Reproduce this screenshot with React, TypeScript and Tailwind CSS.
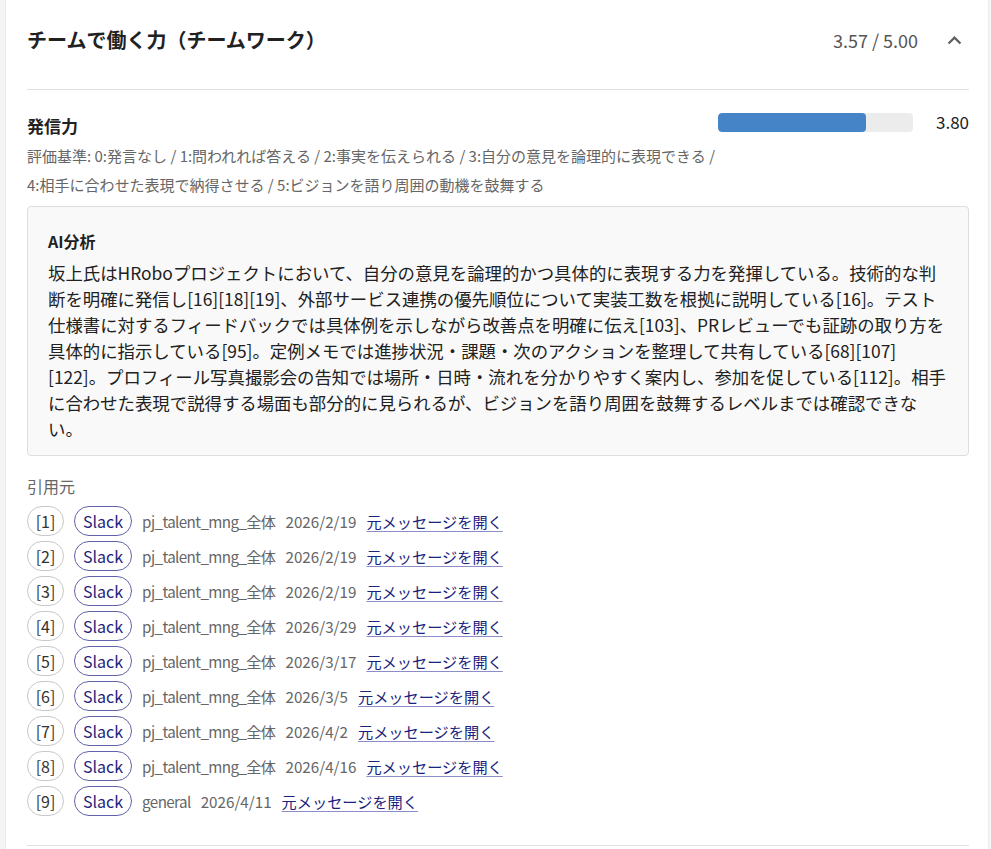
import React from "react";

const refs = [
  { n: 1, ch: "pj_talent_mng_全体", d: "2026/2/19" },
  { n: 2, ch: "pj_talent_mng_全体", d: "2026/2/19" },
  { n: 3, ch: "pj_talent_mng_全体", d: "2026/2/19" },
  { n: 4, ch: "pj_talent_mng_全体", d: "2026/3/29" },
  { n: 5, ch: "pj_talent_mng_全体", d: "2026/3/17" },
  { n: 6, ch: "pj_talent_mng_全体", d: "2026/3/5" },
  { n: 7, ch: "pj_talent_mng_全体", d: "2026/4/2" },
  { n: 8, ch: "pj_talent_mng_全体", d: "2026/4/16" },
  { n: 9, ch: "general", d: "2026/4/11" },
];

const body =
  "坂上氏はHRoboプロジェクトにおいて、自分の意見を論理的かつ具体的に表現する力を発揮している。技術的な判断を明確に発信し[16][18][19]、外部サービス連携の優先順位について実装工数を根拠に説明している[16]。テスト仕様書に対するフィードバックでは具体例を示しながら改善点を明確に伝え[103]、PRレビューでも証跡の取り方を具体的に指示している[95]。定例メモでは進捗状況・課題・次のアクションを整理して共有している[68][107][122]。プロフィール写真撮影会の告知では場所・日時・流れを分かりやすく案内し、参加を促している[112]。相手に合わせた表現で説得する場面も部分的に見られるが、ビジョンを語り周囲を鼓舞するレベルまでは確認できない。";

export default function App() {
  return (
    <div
      className="min-h-[849px] w-[991px] bg-[#f5f5f7] pl-[5px] pr-[2px]"
      style={{ fontFamily: '"Noto Sans CJK JP", "Noto Sans", sans-serif' }}
    >
      <div className="min-h-[849px] border-x border-[#ececef] bg-white pl-[21px] pr-[19px]">
        {/* header */}
        <div className="flex h-[80px] items-center justify-between">
          <h2 className="text-[20px] font-bold leading-[28px] text-[#212121]">
            チームで働く力（チームワーク）
          </h2>
          <div className="flex items-center">
            <span className="text-[18px] leading-[26px] text-[#555]">3.57 / 5.00</span>
            <button className="ml-[21px] flex h-[30px] w-[30px] items-center justify-center">
              <svg width="27" height="27" viewBox="0 0 24 24" fill="#5f5f5f">
                <path d="M12 8l-6 6 1.41 1.41L12 10.83l4.59 4.58L18 14z" />
              </svg>
            </button>
          </div>
        </div>
        <div className="mt-[9px] h-px bg-[#e0e0e0]" />

        {/* item */}
        <div className="mt-[22px] flex items-start justify-between">
          <div className="text-[17px] font-semibold leading-[27px] text-[#212121]">発信力</div>
          <div className="flex items-center">
            <div className="h-[19px] w-[195px] overflow-hidden rounded-[4px] bg-[#ececec]">
              <div className="h-full rounded-[4px] bg-[#4684c8]" style={{ width: `${(3.8 / 5) * 100}%` }} />
            </div>
            <span className="ml-[23px] text-[17px] leading-[20px] text-[#212121]">3.80</span>
          </div>
        </div>
        <p className="mt-[2px] max-w-[700px] text-[15px] leading-[29px] text-[#666]">
          評価基準: 0:発言なし / 1:問われれば答える / 2:事実を伝えられる / 3:自分の意見を論理的に表現できる / 4:相手に合わせた表現で納得させる / 5:ビジョンを語り周囲の動機を鼓舞する
        </p>

        {/* AI box */}
        <div className="mt-[7px] rounded-[4px] border border-[#dedede] bg-[#f9f9f9] px-5 pb-[13px] pt-[20px]">
          <div className="text-[16px] font-bold leading-[28px] text-[#212121]">AI分析</div>
          <p className="mt-[5px] text-[17.4px] leading-[26px] text-[#212121]">{body}</p>
        </div>

        {/* references */}
        <div className="mt-[18px] text-[16px] leading-[24px] text-[#666]">引用元</div>
        <div className="mt-[8px] flex flex-col gap-[5px]">
          {refs.map((r) => (
            <div key={r.n} className="flex items-center gap-[10px]">
              <span className="flex h-[30px] min-w-[37px] items-center justify-center rounded-full border border-[#c8c8c8] px-[7px] text-[16px] text-[#333]">
                [{r.n}]
              </span>
              <span className="flex h-[30px] items-center rounded-full border border-[#6262aa] px-[8px] text-[16px] text-[#1f2379]">
                Slack
              </span>
              <span className="text-[15.2px] tracking-[-0.6px] text-[#666]">{r.ch}</span>
              <span className="text-[15.2px] text-[#666]">{r.d}</span>
              <a
                href="#"
                className="text-[15.2px] text-[#1a237e] underline decoration-[#8c8cc8] underline-offset-[3px]"
              >
                元メッセージを開く
              </a>
            </div>
          ))}
        </div>
        <div className="mt-[29px] h-px bg-[#e0e0e0]" />
      </div>
    </div>
  );
}
